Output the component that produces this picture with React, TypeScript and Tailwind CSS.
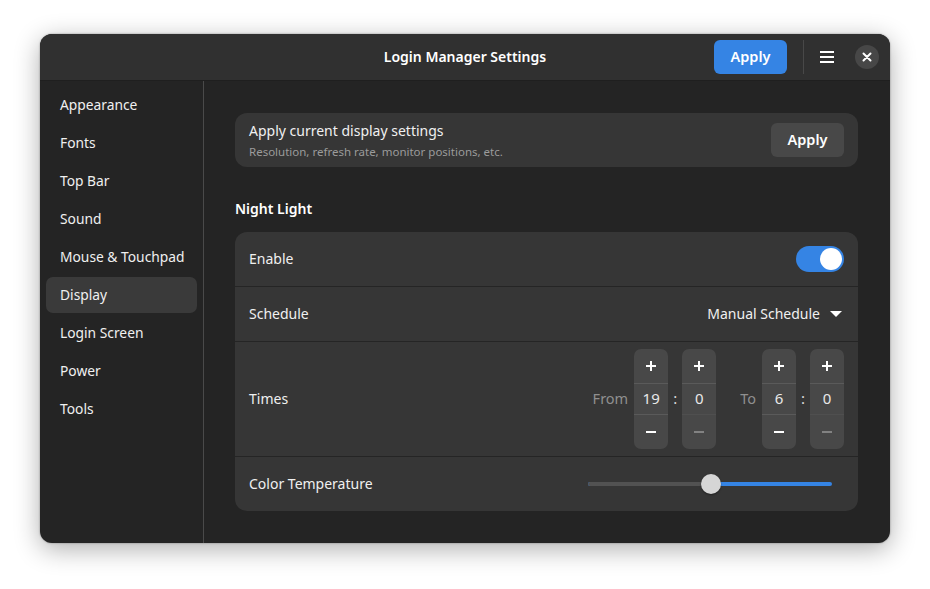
const sections = [
  "Appearance",
  "Fonts",
  "Top Bar",
  "Sound",
  "Mouse & Touchpad",
  "Display",
  "Login Screen",
  "Power",
  "Tools",
];

const Spin = ({ value, minusDim }: { value: string; minusDim?: boolean }) => {
  return (
    <div className="w-[34px] h-[100px] rounded-[7px] bg-[#484848] flex flex-col items-center">
      <div className="h-[35px] w-full flex items-center justify-center border-b border-[#5a5a5a]">
        <svg width="12" height="12" viewBox="0 0 12 12" fill="#ffffff">
          <rect x="1" y="5" width="10" height="2" />
          <rect x="5" y="1" width="2" height="10" />
        </svg>
      </div>
      <div className="h-[30px] w-full pb-[2px] flex items-center justify-center text-[15px] text-[#e8e8e8]">
        {value}
      </div>
      <div
        className={`flex-1 w-full flex items-center justify-center border-t ${
          minusDim ? "border-[#4f4f4f]" : "border-[#5a5a5a]"
        }`}
      >
        <svg width="12" height="12" viewBox="0 0 12 12" fill={minusDim ? "#828282" : "#ffffff"}>
          <rect x="1" y="5" width="10" height="2" />
        </svg>
      </div>
    </div>
  );
};

const Colon = () => <span className="w-[14px] pb-[2px] text-center text-[15px] text-[#dcdcdc]">:</span>;

const App = () => {
  return (
    <div className="w-[930px] h-[589px] bg-white pt-[34px] pl-[40px] overflow-hidden font-['Noto_Sans',sans-serif]">
      <div className="w-[850px] h-[509px] rounded-[12px] overflow-hidden bg-[#242424] text-[#f0f0f0] flex flex-col shadow-[0_6px_26px_rgba(0,0,0,0.32),0_0_2px_rgba(0,0,0,0.4)]">
        <div className="relative h-[47px] shrink-0 bg-[#303030] border-b border-[#1f1f1f] flex items-center justify-end">
          <div className="absolute inset-0 pb-[1px] flex items-center justify-center text-[14px] font-semibold text-white">
            Login Manager Settings
          </div>
          <div className="relative flex items-center pr-[11px]">
            <button className="w-[73px] h-[34px] pb-[1px] rounded-[6px] bg-[#3584e4] text-white text-[14.5px] font-semibold">
              Apply
            </button>
            <div className="w-px h-[34px] bg-[#484848] ml-[16px]" />
            <div className="ml-[16px] w-[14px] h-[12px] flex flex-col justify-between">
              <div className="h-[2px] bg-white" />
              <div className="h-[2px] bg-white" />
              <div className="h-[2px] bg-white" />
            </div>
            <div className="ml-[21px] w-[24px] h-[24px] rounded-full bg-[#474747] flex items-center justify-center">
              <svg width="10" height="10" viewBox="0 0 10 10" stroke="#ffffff" strokeWidth="2" strokeLinecap="round">
                <path d="M1.5 1.5 8.5 8.5M8.5 1.5 1.5 8.5" />
              </svg>
            </div>
          </div>
        </div>

        <div className="flex-1 flex min-h-0">
          <div className="w-[164px] shrink-0 border-r border-[#4a4a4a] pt-[6px] px-[6px] flex flex-col gap-[2px]">
            {sections.map((s) => (
              <div
                key={s}
                className={`h-[36px] px-[14px] flex items-center whitespace-nowrap text-[13.8px] rounded-[7px] ${
                  s === "Display" ? "bg-[#3a3a3a]" : ""
                }`}
              >
                {s}
              </div>
            ))}
          </div>

          <div className="flex-1 pl-[31px] pr-[32px] pt-[32px]">
            <div className="h-[54px] rounded-[12px] bg-[#363636] flex items-center justify-between pl-[14px] pr-[14px]">
              <div className="flex flex-col pt-[1px]">
                <span className="text-[14px] leading-[21px]">Apply current display settings</span>
                <span className="text-[11.5px] leading-[21px] text-[#9b9b9b]">
                  Resolution, refresh rate, monitor positions, etc.
                </span>
              </div>
              <button className="w-[73px] h-[34px] pb-[1px] rounded-[6px] bg-[#484848] text-white text-[14.5px] font-semibold">
                Apply
              </button>
            </div>

            <div className="mt-[32px] h-[20px] pb-[1px] flex items-center text-[14px] font-semibold text-white">
              Night Light
            </div>

            <div className="mt-[13px] rounded-[12px] bg-[#363636] flex flex-col text-[14px]">
              <div className="h-[55px] border-b border-[#252525] flex items-center justify-between px-[14px]">
                <span className="pb-[2px]">Enable</span>
                <div className="w-[48px] h-[26px] rounded-full bg-[#3584e4] flex items-center justify-end pr-[2px]">
                  <div className="w-[22px] h-[22px] rounded-full bg-white" />
                </div>
              </div>

              <div className="h-[55px] border-b border-[#252525] flex items-center justify-between pl-[14px] pr-[16px]">
                <span className="pb-[2px]">Schedule</span>
                <div className="flex items-center gap-[10px]">
                  <span className="pb-[2px]">Manual Schedule</span>
                  <svg width="12" height="6" viewBox="0 0 12 6" fill="#ffffff">
                    <path d="M0 0h12L6 6z" />
                  </svg>
                </div>
              </div>

              <div className="h-[115px] border-b border-[#252525] flex items-center justify-between pl-[14px] pr-[14px]">
                <span className="pb-[2px]">Times</span>
                <div className="flex items-center">
                  <span className="mr-[6px] text-[#8f8f8f] text-[14.5px]">From</span>
                  <Spin value="19" />
                  <Colon />
                  <Spin value="0" minusDim />
                  <span className="ml-[24px] mr-[6px] text-[#8f8f8f] text-[14.5px]">To</span>
                  <Spin value="6" />
                  <Colon />
                  <Spin value="0" minusDim />
                </div>
              </div>

              <div className="h-[54px] flex items-center justify-between pl-[14px] pr-[26px]">
                <span className="pb-[2px]">Color Temperature</span>
                <div className="relative w-[244px] h-[4px] rounded-full bg-[#3584e4]">
                  <div className="h-full w-[123px] rounded-l-full bg-[#525252]" />
                  <div className="absolute left-[113px] top-[-8px] w-[20px] h-[20px] rounded-full bg-[#d6d6d6] shadow-[0_1px_2px_rgba(0,0,0,0.4)]" />
                </div>
              </div>
            </div>
          </div>
        </div>
      </div>
    </div>
  );
};

export default App;
